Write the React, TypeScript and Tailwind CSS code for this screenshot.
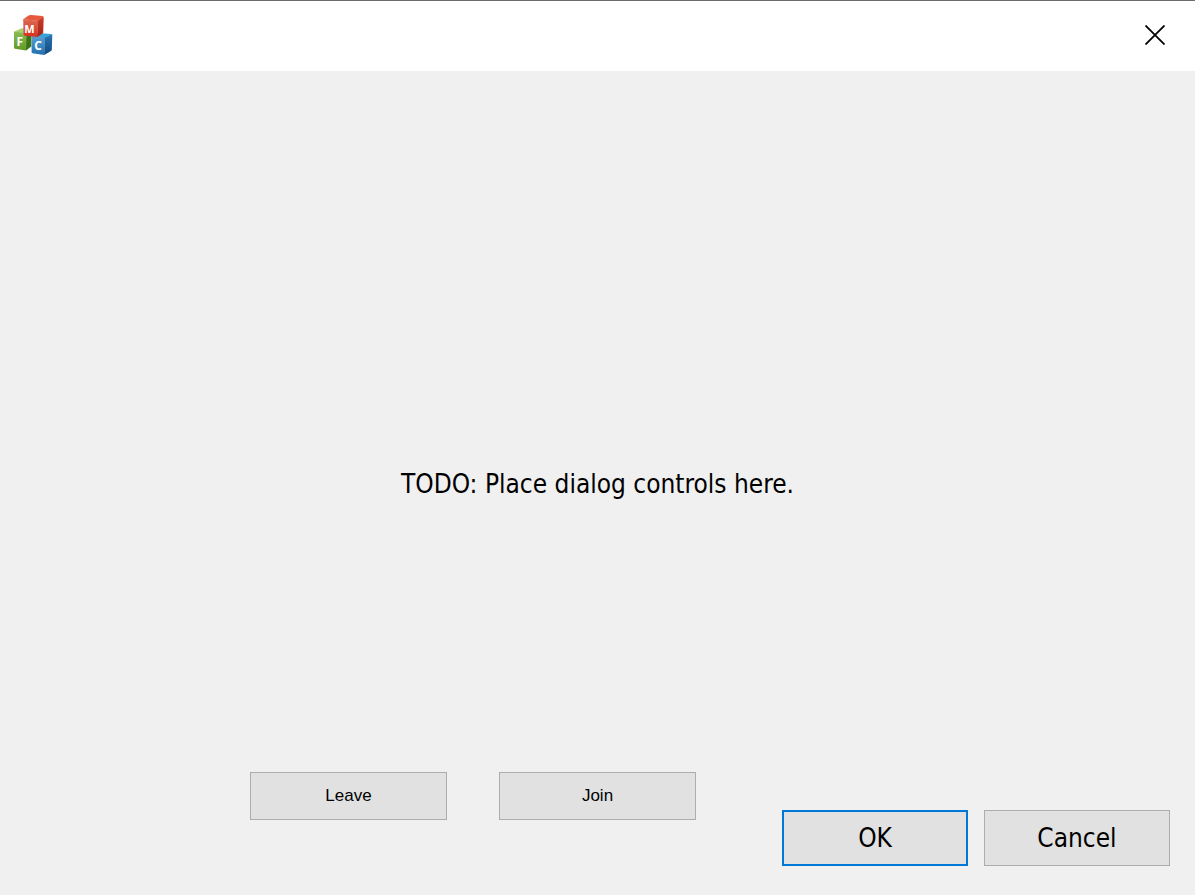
import type { ReactNode } from "react";

function CubesIcon() {
  return (
    <svg width="40" height="42" viewBox="13 14 40 42" aria-hidden="true" className="shrink-0">
      <defs>
        <linearGradient id="redFront" x1="0" y1="0" x2="0" y2="1">
          <stop offset="0" stopColor="#dc6b52" />
          <stop offset="1" stopColor="#d8301f" />
        </linearGradient>
        <linearGradient id="redSide" x1="0" y1="0" x2="0" y2="1">
          <stop offset="0" stopColor="#c9402c" />
          <stop offset="1" stopColor="#a81f14" />
        </linearGradient>
        <linearGradient id="greenFront" x1="0" y1="0" x2="0" y2="1">
          <stop offset="0" stopColor="#8dbb54" />
          <stop offset="1" stopColor="#5f9a26" />
        </linearGradient>
        <linearGradient id="blueFront" x1="0" y1="0" x2="0" y2="1">
          <stop offset="0" stopColor="#5b9fd0" />
          <stop offset="1" stopColor="#1f6fb2" />
        </linearGradient>
        <linearGradient id="blueSide" x1="0" y1="0" x2="0" y2="1">
          <stop offset="0" stopColor="#2b76b5" />
          <stop offset="1" stopColor="#10487f" />
        </linearGradient>
      </defs>
      <path d="M14 31.5 L22 28.2 Q28 28 31 30 L26.5 33.2Z" fill="#a9d06c" />
      <path d="M14 31.5 L26.5 33 L26 50.5 L14.8 48.8 Q14 48.5 14 47.5Z" fill="url(#greenFront)" />
      <path d="M26.3 33 L31.5 30 L31.3 46.5 L26 50.5Z" fill="#3d7317" />
      <path d="M31.5 36.5 L38.5 33 L51 34 Q52.5 34.3 51.8 35 L45 38.5Z" fill="#3aa3d8" />
      <path d="M31.5 36 L45 38 L44.3 55 L32.5 53.2 Q31.6 53 31.6 52Z" fill="url(#blueFront)" />
      <path d="M44.8 38 L52.3 34.3 L51.8 49.8 Q51.7 50.6 51 51 L44.2 55Z" fill="url(#blueSide)" />
      <path d="M23.2 19.3 L29 15.3 Q30 14.8 31.5 14.9 L42.5 16 Q44 16.4 43 17.2 L38 21Z" fill="#e8583c" />
      <path d="M23.2 19 L38 20.7 L37.4 37 L24.6 35.8 Q23.7 35.6 23.6 34.5Z" fill="url(#redFront)" />
      <path d="M37.8 20.7 L43.7 16.8 L43.2 32.4 Q43.1 33 42.5 33.5 L37.3 37Z" fill="url(#redSide)" />
      <g fill="#fff" fontFamily="'Open Sans', sans-serif" fontWeight="700" textAnchor="middle">
        <text x="29.5" y="32.8" fontSize="11">M</text>
        <text x="19.8" y="46" fontSize="12">F</text>
        <text x="38.2" y="50" fontSize="12">C</text>
      </g>
    </svg>
  );
}

type DialogButtonProps = {
  children: ReactNode;
  variant: "small" | "standard" | "default";
};

const buttonStyles = {
  small: "h-12 w-[197px] border border-[#adadad] font-['Liberation_Sans',sans-serif] text-[17px]",
  standard: "h-14 w-[186px] border border-[#adadad] text-[26px]",
  default: "h-14 w-[186px] border-2 border-[#0078d7] text-[26px]",
};

function DialogButton({ children, variant }: DialogButtonProps) {
  return (
    <button type="button" className={`flex items-center justify-center bg-[#e1e1e1] leading-8 ${buttonStyles[variant]}`}>
      {children}
    </button>
  );
}

export default function App() {
  return (
    <div className="flex min-h-screen flex-col border-t border-[#6b6b6b] bg-[#f0f0f0] font-['DejaVu_Sans_Condensed',sans-serif] text-black">
      <header className="flex h-[70px] items-center justify-between bg-white pb-0.5 pl-[13px]">
        <CubesIcon />
        <button type="button" aria-label="Close" className="flex h-full w-20 items-center justify-center">
          <svg width="20" height="20" viewBox="0 0 20 20" fill="none" stroke="#000" strokeWidth="1.8" aria-hidden="true">
            <path d="M0.5 0.5 L19.5 19.5 M19.5 0.5 L0.5 19.5" />
          </svg>
        </button>
      </header>
      <main className="grid flex-1 grid-rows-[1fr_auto_1fr] pt-0.5">
        <p className="row-start-2 text-center text-[26px] leading-8">TODO: Place dialog controls here.</p>
        <footer className="row-start-3 flex items-end justify-end self-end pr-[25px] pb-[29px]">
          <div className="mr-[86px] mb-[46px] flex gap-[52px]">
            <DialogButton variant="small">Leave</DialogButton>
            <DialogButton variant="small">Join</DialogButton>
          </div>
          <div className="flex gap-4">
            <DialogButton variant="default">OK</DialogButton>
            <DialogButton variant="standard">Cancel</DialogButton>
          </div>
        </footer>
      </main>
    </div>
  );
}
